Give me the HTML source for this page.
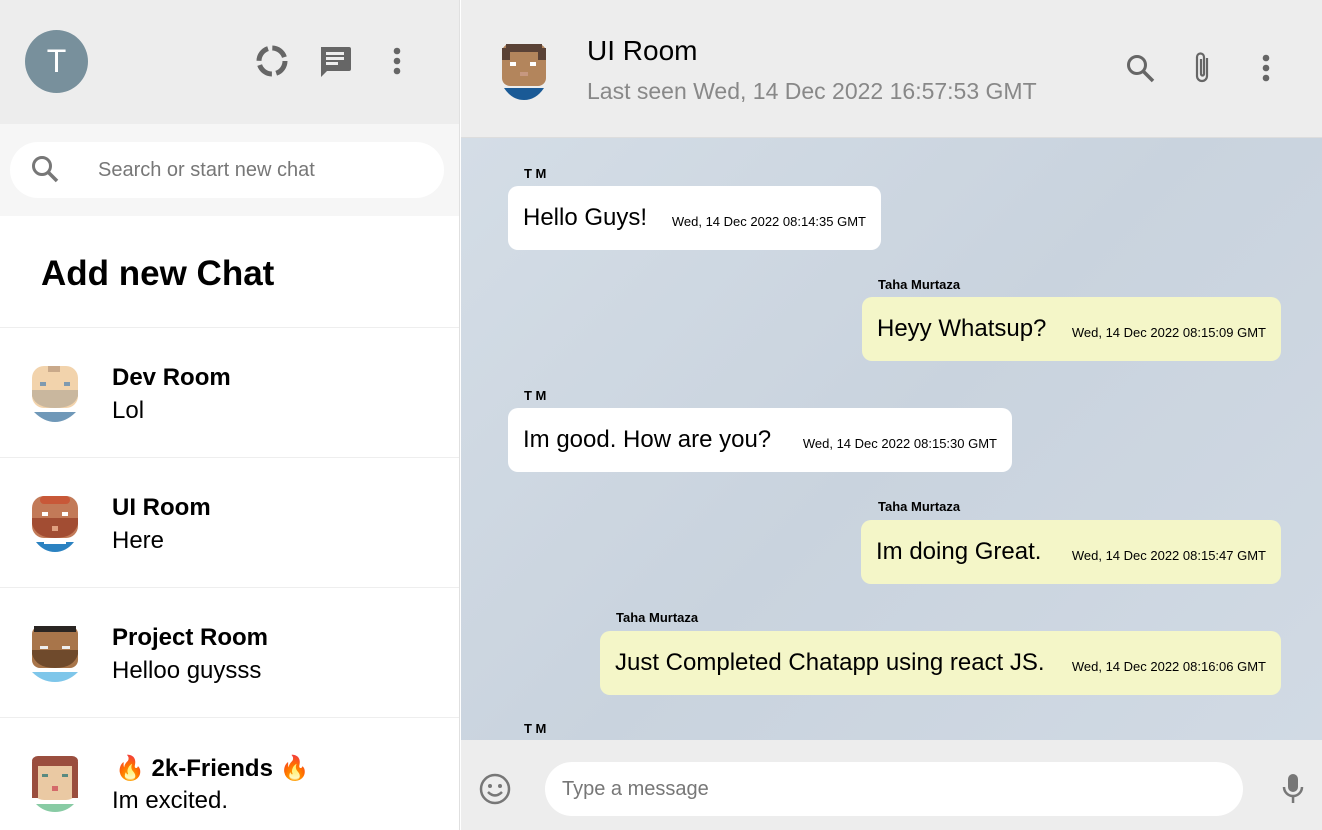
<!DOCTYPE html>
<html><head><meta charset="utf-8"><style>
*{box-sizing:border-box;margin:0;padding:0}
body{width:1322px;height:830px;overflow:hidden;font-family:"Liberation Sans",sans-serif;background:#fff;position:relative}
.side{position:absolute;left:0;top:0;width:460px;height:830px;border-right:1px solid #e0e0e0;overflow:hidden}
.sh{height:124px;background:#ededed;position:relative}
.av{position:absolute;left:25px;top:30px;width:63px;height:63px;border-radius:50%;background:#78909c;color:#fff;font-size:32px;text-align:center;line-height:63px}
.ss{height:92px;background:#f6f6f6;position:relative}
.si{position:absolute;left:10px;top:18px;width:434px;height:56px;background:#fff;border-radius:28px}
.si span{position:absolute;left:88px;top:17px;font-size:20px;color:#777}
.add{height:112px;border-bottom:1px solid #eee;font-weight:bold;font-size:35px;padding:38px 0 0 41px}
.it{height:130px;border-bottom:1px solid #eee;position:relative}
.it svg{position:absolute;left:28px;top:36px}
.it b{position:absolute;left:112px;top:36px;font-size:24px}
.it span{position:absolute;left:112px;top:69px;font-size:24px}
.main{position:absolute;left:461px;top:0;width:861px;height:830px}
.mh{height:138px;background:#ededed;border-bottom:1px solid #ddd;position:relative}
.body{position:absolute;top:138px;left:0;width:861px;height:602px;background:linear-gradient(135deg,#d4dde6,#c9d3de 50%,#d1dae4)}
.ft{position:absolute;top:740px;left:0;width:861px;height:90px;background:#ededed}
.nm{position:absolute;font-size:13px;font-weight:bold}
.bb{position:absolute;height:64px;border-radius:10px;background:#fff;padding:0 15px;font-size:24px;white-space:nowrap;display:flex;align-items:center}
.bb small{font-size:13px;margin-left:auto;padding-left:10px;padding-top:6px}
.me{background:#f4f6c8}
</style></head><body>
<div class="side">
<div class="sh"><div class="av">T</div>
<svg style="position:absolute;left:255px;top:44px" width="34" height="34" viewBox="0 0 34 34"><circle cx="17" cy="17" r="13" fill="none" stroke="#666" stroke-width="5" stroke-dasharray="16 4.4"/></svg>
<svg style="position:absolute;left:318px;top:45px" width="34" height="32" viewBox="0 0 34 32"><path d="M3 2h28a2 2 0 0 1 2 2v20a2 2 0 0 1-2 2H9l-6 6z" fill="#666"/><rect x="8" y="7" width="18" height="3" fill="#ededed"/><rect x="8" y="12" width="18" height="3" fill="#ededed"/><rect x="8" y="17" width="12" height="3" fill="#ededed"/></svg>
<svg style="position:absolute;left:390px;top:46px" width="14" height="30"><circle cx="7" cy="5" r="3.3" fill="#666"/><circle cx="7" cy="15" r="3.3" fill="#666"/><circle cx="7" cy="25" r="3.3" fill="#666"/></svg>
</div>
<div class="ss"><div class="si"><svg style="position:absolute;left:20px;top:12px" width="30" height="30"><circle cx="12" cy="12" r="8.5" fill="none" stroke="#777" stroke-width="3"/><path d="M18 18l9 9" stroke="#777" stroke-width="3.5"/></svg><span>Search or start new chat</span></div></div>
<div class="add">Add new Chat</div>
<div class="it"><svg width="54" height="58" viewBox="0 0 54 58"><rect x="4" y="2" width="46" height="42" rx="12" fill="#f2d3ac"/><rect x="20" y="2" width="12" height="6" fill="#c9a98a"/><path d="M4 26h46v6q-4 12-23 12t-23-12z" fill="#c9b79e"/><rect x="12" y="18" width="6" height="4" fill="#7f9ab0"/><rect x="36" y="18" width="6" height="4" fill="#7f9ab0"/><path d="M6 48h42q-10 10-21 10t-21-10z" fill="#6f98b8"/></svg><b>Dev Room</b><span>Lol</span></div>
<div class="it"><svg width="54" height="58" viewBox="0 0 54 58"><rect x="4" y="2" width="46" height="42" rx="12" fill="#c27a58"/><path d="M4 24h46v6q-4 14-23 14t-23-14z" fill="#a24d33"/><rect x="12" y="2" width="30" height="8" rx="4" fill="#c85838"/><rect x="14" y="18" width="6" height="4" fill="#fff"/><rect x="34" y="18" width="6" height="4" fill="#fff"/><rect x="24" y="32" width="6" height="5" fill="#e0a080"/><path d="M8 48h38q-8 10-19 10t-19-10z" fill="#2b82c1"/><rect x="16" y="46" width="22" height="4" fill="#fff"/></svg><b>UI Room</b><span>Here</span></div>
<div class="it"><svg width="54" height="58" viewBox="0 0 54 58"><rect x="4" y="2" width="46" height="42" rx="8" fill="#a8754a"/><rect x="6" y="2" width="42" height="6" fill="#2a2522"/><path d="M4 26h46v4q-4 14-23 14t-23-14z" fill="#6f4a2c"/><rect x="12" y="22" width="8" height="3" fill="#eee"/><rect x="34" y="22" width="8" height="3" fill="#eee"/><path d="M4 48h46q-10 10-23 10t-23-10z" fill="#7ec6ea"/></svg><b>Project Room</b><span>Helloo guysss</span></div>
<div class="it"><svg width="54" height="58" viewBox="0 0 54 58"><rect x="4" y="2" width="46" height="44" rx="12" fill="#eac9a3"/><rect x="4" y="2" width="46" height="10" rx="6" fill="#9a4e3e"/><rect x="4" y="8" width="6" height="36" fill="#9a4e3e"/><rect x="44" y="8" width="6" height="36" fill="#9a4e3e"/><rect x="14" y="20" width="6" height="3" fill="#5a8a80"/><rect x="34" y="20" width="6" height="3" fill="#5a8a80"/><rect x="24" y="32" width="6" height="5" fill="#d46a6a"/><path d="M8 50h38q-8 8-19 8t-19-8z" fill="#88cba4"/></svg><b style="left:115px">🔥 2k-Friends 🔥</b><span>Im excited.</span></div>
</div>
<div class="main">
<div class="mh">
<svg style="position:absolute;left:37px;top:42px" width="52" height="58" viewBox="0 0 52 58"><rect x="4" y="2" width="44" height="42" rx="8" fill="#b3855c"/><rect x="8" y="2" width="36" height="8" fill="#5a4236"/><rect x="4" y="6" width="8" height="12" fill="#5a4236"/><rect x="40" y="6" width="8" height="12" fill="#5a4236"/><rect x="12" y="20" width="6" height="4" fill="#fff"/><rect x="32" y="20" width="6" height="4" fill="#fff"/><rect x="22" y="30" width="8" height="4" fill="#c79880"/><path d="M6 46h40q-8 12-20 12t-20-12z" fill="#1a5a96"/></svg>
<div style="position:absolute;left:126px;top:35px;font-size:28px">UI Room</div>
<div style="position:absolute;left:126px;top:78px;font-size:23px;color:#888">Last seen Wed, 14 Dec 2022 16:57:53 GMT</div>
<svg style="position:absolute;left:664px;top:53px" width="32" height="32"><circle cx="12" cy="12" r="8.5" fill="none" stroke="#666" stroke-width="3"/><path d="M18 18l10 10" stroke="#666" stroke-width="3.5"/></svg>
<svg style="position:absolute;left:730px;top:50px" width="24" height="36" viewBox="0 0 24 36"><path d="M16 8v18a5 5 0 0 1-10 0V7a3.5 3.5 0 0 1 7 0v17a1.5 1.5 0 0 1-3 0V9" fill="none" stroke="#666" stroke-width="2.2"/></svg>
<svg style="position:absolute;left:798px;top:53px" width="14" height="30"><circle cx="7" cy="5" r="3.3" fill="#666"/><circle cx="7" cy="15" r="3.3" fill="#666"/><circle cx="7" cy="25" r="3.3" fill="#666"/></svg>
</div>
<div class="body">
<div class="nm" style="left:63px;top:28px">T M</div>
<div class="bb" style="left:47px;top:48px;width:373px">Hello Guys!<small>Wed, 14 Dec 2022 08:14:35 GMT</small></div>
<div class="nm" style="left:417px;top:139px">Taha Murtaza</div>
<div class="bb me" style="left:401px;top:159px;width:419px">Heyy Whatsup?<small>Wed, 14 Dec 2022 08:15:09 GMT</small></div>
<div class="nm" style="left:63px;top:250px">T M</div>
<div class="bb" style="left:47px;top:270px;width:504px">Im good. How are you?<small>Wed, 14 Dec 2022 08:15:30 GMT</small></div>
<div class="nm" style="left:417px;top:361px">Taha Murtaza</div>
<div class="bb me" style="left:400px;top:382px;width:420px">Im doing Great.<small>Wed, 14 Dec 2022 08:15:47 GMT</small></div>
<div class="nm" style="left:155px;top:472px">Taha Murtaza</div>
<div class="bb me" style="left:139px;top:493px;width:681px">Just Completed Chatapp using react JS.<small>Wed, 14 Dec 2022 08:16:06 GMT</small></div>
<div class="nm" style="left:63px;top:583px">T M</div>
</div>
<div class="ft">
<svg style="position:absolute;left:18px;top:33px" width="32" height="32"><circle cx="16" cy="16" r="14" fill="none" stroke="#777" stroke-width="2.5"/><circle cx="11" cy="13" r="2" fill="#777"/><circle cx="21" cy="13" r="2" fill="#777"/><path d="M9 19q7 7 14 0" fill="none" stroke="#777" stroke-width="2.5"/></svg>
<div style="position:absolute;left:84px;top:22px;width:698px;height:54px;background:#fff;border-radius:27px;padding:16px 0 0 17px;font-size:20px;color:#777">Type a message</div>
<svg style="position:absolute;left:820px;top:32px" width="24" height="34" viewBox="0 0 24 34"><rect x="7" y="2" width="10" height="18" rx="5" fill="#777"/><path d="M3 15a9 9 0 0 0 18 0" fill="none" stroke="#777" stroke-width="2.5"/><rect x="10.8" y="24" width="2.5" height="7" fill="#777"/></svg>
</div>
</div>
</body></html>
